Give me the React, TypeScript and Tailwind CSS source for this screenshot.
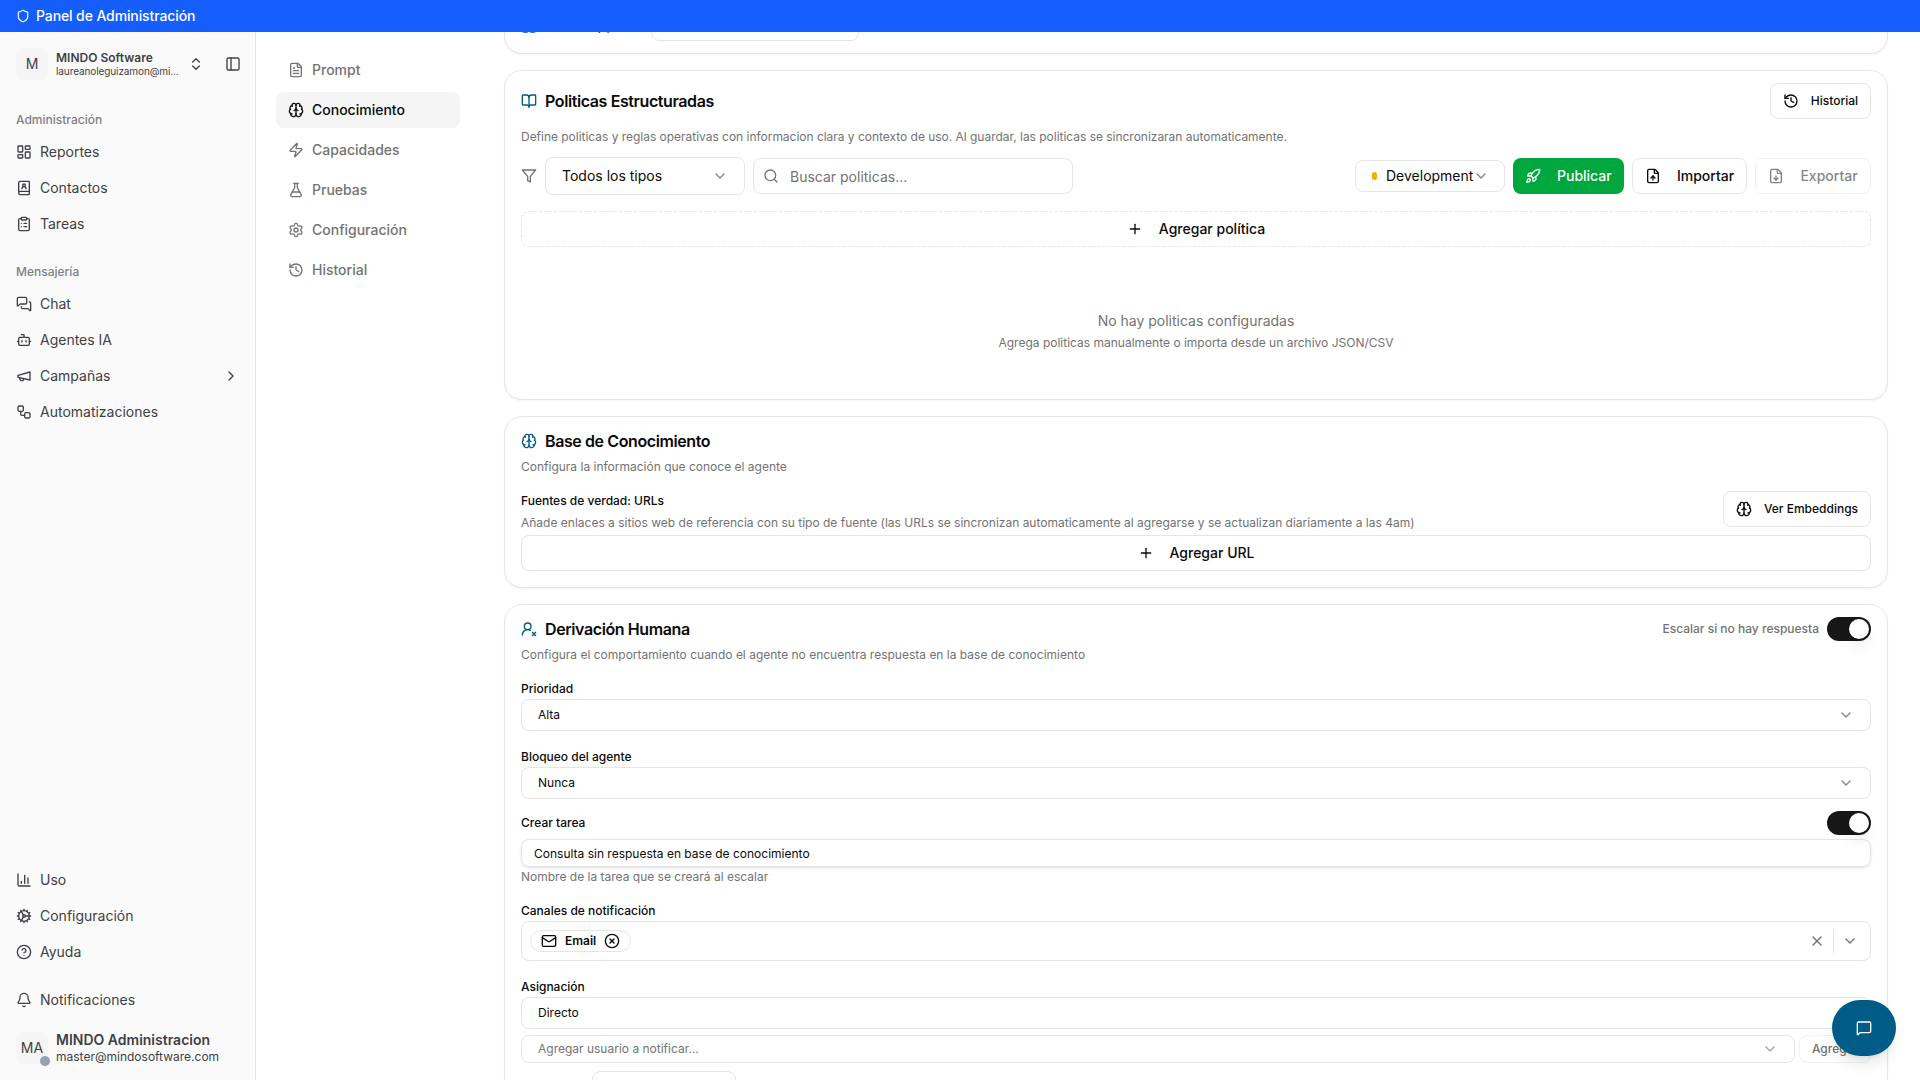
import React from 'react'
import {
  BellIcon,
  BookOpen,
  BotIcon,
  Brain,
  ChartColumn,
  ChevronDown,
  ChevronRight,
  ChevronsUpDown,
  CircleHelp,
  CircleX,
  ClipboardList,
  Cog,
  BookUser,
  FileDown,
  FileText,
  FileUp,
  FlaskConical,
  History,
  LayoutDashboard,
  LayoutGrid,
  Mail,
  MessageSquare,
  MessagesSquare,
  PanelLeft,
  Plus,
  Rocket,
  Search,
  Settings,
  Shield,
  UserRoundX,
  Workflow,
  X,
  Zap,
} from 'lucide-react'

type IconType = React.ComponentType<{ className?: string }>

interface NavEntry {
  icon: IconType
  label: string
  active?: boolean
  expandable?: boolean
}

const MegaphoneIcon: IconType = ({ className }) => (
  <svg className={className} viewBox="0 0 24 24" fill="none" stroke="currentColor" strokeWidth="2" strokeLinecap="round" strokeLinejoin="round">
    <path d="m3 11 18-5v12L3 14v-3z" />
    <path d="M11.6 16.8a3 3 0 1 1-5.8-1.6" />
  </svg>
)

const FilterIcon: IconType = ({ className }) => (
  <svg className={className} viewBox="0 0 24 24" fill="none" stroke="currentColor" strokeWidth="2" strokeLinecap="round" strokeLinejoin="round">
    <path d="M22 3H2l8 9.46V19l4 2v-8.54z" />
  </svg>
)

const ADMIN_ITEMS: NavEntry[] = [
  { icon: LayoutDashboard, label: 'Reportes' },
  { icon: BookUser, label: 'Contactos' },
  { icon: ClipboardList, label: 'Tareas' },
]

const MESSAGING_ITEMS: NavEntry[] = [
  { icon: MessagesSquare, label: 'Chat' },
  { icon: BotIcon, label: 'Agentes IA' },
  { icon: MegaphoneIcon, label: 'Campañas', expandable: true },
  { icon: Workflow, label: 'Automatizaciones' },
]

const FOOTER_ITEMS: NavEntry[] = [
  { icon: ChartColumn, label: 'Uso' },
  { icon: Cog, label: 'Configuración' },
  { icon: CircleHelp, label: 'Ayuda' },
]

const AGENT_TABS: NavEntry[] = [
  { icon: FileText, label: 'Prompt' },
  { icon: Brain, label: 'Conocimiento', active: true },
  { icon: Zap, label: 'Capacidades' },
  { icon: FlaskConical, label: 'Pruebas' },
  { icon: Settings, label: 'Configuración' },
  { icon: History, label: 'Historial' },
]

function SidebarItem({ icon: Icon, label, expandable }: NavEntry) {
  return (
    <a className="flex h-8 items-center gap-2 rounded-md px-2 text-sm text-[#3f3f46]">
      <Icon className="size-4 shrink-0" />
      <span className="flex-1">{label}</span>
      {expandable && <ChevronRight className="size-4" />}
    </a>
  )
}

function SidebarGroup({ label, items }: { label: string; items: NavEntry[] }) {
  return (
    <div className="p-2">
      <p className="flex h-8 items-center px-2 text-xs font-medium text-[#7f7f86]">{label}</p>
      <div className="flex flex-col gap-1">
        {items.map(item => <SidebarItem key={item.label} {...item} />)}
      </div>
    </div>
  )
}

function Sidebar() {
  return (
    <aside className="flex w-64 shrink-0 flex-col border-r border-[#e5e5e5] bg-[#fafafa] text-[#3f3f46]">
      {/* Workspace switcher */}
      <div className="flex h-16 items-center pl-4">
        <div className="flex size-8 shrink-0 items-center justify-center rounded-lg bg-[#f5f5f5] text-sm">M</div>
        <div className="ml-2 w-[125px] shrink-0">
          <p className="text-xs leading-[14px] font-semibold">MINDO Software</p>
          <p className="text-[10px] leading-[13px] tracking-[-0.01em] whitespace-nowrap">laureanoleguizamon@mi...</p>
        </div>
        <ChevronsUpDown className="ml-[7px] size-4 shrink-0" />
        <PanelLeft className="ml-[21px] size-4 shrink-0" />
      </div>

      <SidebarGroup label="Administración" items={ADMIN_ITEMS} />
      <SidebarGroup label="Mensajería" items={MESSAGING_ITEMS} />

      <div className="mt-auto flex flex-col gap-1 px-2">
        {FOOTER_ITEMS.map(item => <SidebarItem key={item.label} {...item} />)}
      </div>
      <div className="mt-4 px-2">
        <SidebarItem icon={BellIcon} label="Notificaciones" />
      </div>

      {/* Current user */}
      <div className="my-2 flex h-12 items-center px-4">
        <div className="relative flex size-8 items-center justify-center rounded-lg bg-[#f5f5f5] text-sm">
          MA
          <span className="absolute -right-[3px] -bottom-[3px] size-3 rounded-full border border-[#fafafa] bg-[#99a1af]" />
        </div>
        <div className="ml-2 pb-px">
          <p className="text-sm leading-[17px] font-semibold">MINDO Administracion</p>
          <p className="text-xs leading-[17px]">master@mindosoftware.com</p>
        </div>
      </div>
    </aside>
  )
}

function AgentTabs() {
  return (
    <nav className="flex w-[184px] shrink-0 flex-col gap-1 pt-5">
      {AGENT_TABS.map(({ icon: Icon, label, active }) => (
        <a
          key={label}
          className={`flex h-9 items-center gap-2 rounded-lg px-3 text-sm font-medium ${active ? 'bg-[#f5f5f5] text-[#0a0a0a]' : 'text-[#737373]'}`}
        >
          <Icon className="size-4" />
          {label}
        </a>
      ))}
    </nav>
  )
}

function Card({ className = '', children }: { className?: string; children: React.ReactNode }) {
  return (
    <section className={`shrink-0 rounded-[18px] border border-[#e5e5e5] bg-white px-4 shadow-xs ${className}`}>
      {children}
    </section>
  )
}

function CardTitle({ icon: Icon, children }: { icon: IconType; children: React.ReactNode }) {
  return (
    <h2 className="flex items-center gap-2 text-base leading-4 font-semibold tracking-tight">
      <Icon className="size-4 text-[#005c87]" />
      {children}
    </h2>
  )
}

interface OutlineButtonProps {
  icon: IconType
  className?: string
  children: React.ReactNode
}

function OutlineButton({ icon: Icon, className = '', children }: OutlineButtonProps) {
  return (
    <button className={`flex h-9 items-center justify-center rounded-lg border border-[#e5e5e5] font-medium ${className}`}>
      <Icon className="size-4" />
      {children}
    </button>
  )
}

function Toggle() {
  return (
    <span className="flex h-6 w-11 items-center justify-end rounded-full bg-[#171717] p-0.5">
      <span className="size-5 rounded-full bg-white shadow-lg" />
    </span>
  )
}

function SelectField({ label, value }: { label: string; value: string }) {
  return (
    <div>
      <p className="text-xs leading-5 font-medium">{label}</p>
      <div className="flex h-8 items-center justify-between rounded-lg border border-[#e5e5e5] px-4 text-xs">
        {value}
        <ChevronDown className="size-4 text-[#858585]" />
      </div>
    </div>
  )
}

function PoliciesCard() {
  return (
    <Card className="h-[330px] pt-3">
      <div className="flex items-center justify-between">
        <CardTitle icon={BookOpen}>Politicas Estructuradas</CardTitle>
        <OutlineButton icon={History} className="w-[101px] gap-3 text-xs">Historial</OutlineButton>
      </div>
      <p className="mt-2.5 text-xs tracking-[-0.002em] text-[#737373]">
        Define politicas y reglas operativas con informacion clara y contexto de uso. Al guardar, las politicas se sincronizaran automaticamente.
      </p>

      {/* Filters and actions */}
      <div className="mt-3 flex items-center gap-2 text-sm">
        <FilterIcon className="size-4 text-[#737373]" />
        <div className="flex h-[38px] w-[200px] items-center justify-between rounded-lg border border-[#e5e5e5] px-4">
          Todos los tipos
          <ChevronDown className="size-4 text-[#858585]" />
        </div>
        <div className="flex h-9 w-80 items-center gap-[11px] rounded-lg border border-[#e5e5e5] px-[9px] text-[#737373]">
          <Search className="size-4" />
          <span className="pt-0.5">Buscar politicas...</span>
        </div>
        <div className="ml-auto flex h-8 w-[150px] items-center rounded-lg border border-[#e5e5e5] pl-4">
          <span className="mr-[9px] h-2 w-[5px] rounded-full bg-[#f0b100]" />
          Development
          <ChevronDown className="size-4 text-[#858585]" />
        </div>
        <button className="flex h-9 w-[111px] items-center gap-4 rounded-lg bg-[#00a63e] px-3 font-medium text-white">
          <Rocket className="size-4" />
          Publicar
        </button>
        <OutlineButton icon={FileUp} className="w-[115px] gap-4">Importar</OutlineButton>
        <OutlineButton icon={FileDown} className="w-[116px] gap-4 opacity-50">Exportar</OutlineButton>
      </div>

      <OutlineButton icon={Plus} className="mt-4 w-full gap-4 border-dashed text-sm">Agregar política</OutlineButton>

      <div className="mt-16 text-center text-[#737373]">
        <p className="text-sm">No hay politicas configuradas</p>
        <p className="mt-1 text-xs">Agrega politicas manualmente o importa desde un archivo JSON/CSV</p>
      </div>
    </Card>
  )
}

function KnowledgeCard() {
  return (
    <Card className="h-[172px] pt-4">
      <CardTitle icon={Brain}>Base de Conocimiento</CardTitle>
      <p className="mt-2.5 text-xs text-[#737373]">Configura la información que conoce el agente</p>
      <div className="mt-4 flex h-9 justify-between">
        <div>
          <p className="text-xs leading-5 font-medium">Fuentes de verdad: URLs</p>
          <p className="mt-1 text-xs text-[#737373]">
            Añade enlaces a sitios web de referencia con su tipo de fuente (las URLs se sincronizan automaticamente al agregarse y se actualizan diariamente a las 4am)
          </p>
        </div>
        <OutlineButton icon={Brain} className="w-[148px] gap-3 text-xs">Ver Embeddings</OutlineButton>
      </div>
      <OutlineButton icon={Plus} className="mt-2 w-full gap-4 text-sm">Agregar URL</OutlineButton>
    </Card>
  )
}

function HandoffCard() {
  return (
    <Card className="h-[560px] pt-3">
      <div className="flex h-6 items-center justify-between">
        <CardTitle icon={UserRoundX}>Derivación Humana</CardTitle>
        <div className="flex items-center gap-2 text-xs font-medium text-[#737373]">
          Escalar si no hay respuesta
          <Toggle />
        </div>
      </div>
      <p className="mt-1.5 mb-4 text-xs text-[#737373]">
        Configura el comportamiento cuando el agente no encuentra respuesta en la base de conocimiento
      </p>

      <div className="flex flex-col gap-4">
        <SelectField label="Prioridad" value="Alta" />
        <SelectField label="Bloqueo del agente" value="Nunca" />
      </div>

      <div className="mt-3 flex h-6 items-center justify-between text-xs font-medium">
        Crear tarea
        <Toggle />
      </div>
      <div className="mt-1 flex h-7 items-center rounded-lg border border-[#e5e5e5] px-3 pt-0.5 text-xs shadow-sm">
        Consulta sin respuesta en base de conocimiento
      </div>
      <p className="mt-0.5 text-xs text-[#737373]">Nombre de la tarea que se creará al escalar</p>

      <p className="mt-4 text-xs leading-5 font-medium">Canales de notificación</p>
      <div className="flex h-10 items-center rounded-lg border border-[#e5e5e5] pr-3 pl-2">
        <span className="flex h-[22px] items-center gap-2 rounded-full border border-[#e5e5e5] px-2.5 text-xs font-semibold">
          <Mail className="size-4" />
          Email
          <CircleX className="size-4" />
        </span>
        <X className="ml-auto size-4 text-[#737373]" />
        <span className="mx-2 h-6 w-px bg-[#e5e5e5]" />
        <ChevronDown className="size-4 text-[#737373]" />
      </div>

      <div className="mt-4">
        <SelectField label="Asignación" value="Directo" />
      </div>
      <div className="mt-1.5 flex h-7 gap-1 text-xs text-[#737373]">
        <div className="flex flex-1 items-center justify-between rounded-lg border border-[#e5e5e5] px-4">
          Agregar usuario a notificar...
          <ChevronDown className="size-4 text-[#a3a3a3]" />
        </div>
        <button className="w-[72px] rounded-lg border border-[#f0f0f0] font-medium">Agregar</button>
      </div>
      <div className="mt-2 h-7 pl-[71px]">
        <div className="h-7 w-36 rounded-lg border border-[#e5e5e5]" />
      </div>
    </Card>
  )
}

export default function App() {
  return (
    <div className="flex h-[1080px] w-[1920px] flex-col overflow-hidden bg-white font-['Inter',sans-serif] text-[#0a0a0a]">
      <header className="z-10 flex h-8 shrink-0 items-center gap-1.5 bg-[#155dfc] px-4 text-sm font-medium tracking-[-0.008em] text-white">
        <Shield className="size-3.5" />
        Panel de Administración
      </header>

      <div className="flex min-h-0 flex-1">
        <Sidebar />
        <main className="flex min-h-0 flex-1 overflow-hidden pr-8 pl-5">
          <AgentTabs />
          <div className="ml-11 flex min-w-0 flex-1 flex-col gap-4">
            {/* Tail of the card scrolled under the header */}
            <Card className="-mt-9 h-[58px]">
              <div className="mt-3 flex h-8 items-center text-sm font-medium">
                <LayoutGrid className="mt-0.5 size-4 text-[#005c87]" />
                <span className="ml-2 w-[106px]">WhatsApp</span>
                <div className="h-8 w-[208px] rounded-lg border border-[#e5e5e5]" />
              </div>
            </Card>
            <PoliciesCard />
            <KnowledgeCard />
            <HandoffCard />
          </div>
        </main>
      </div>

      <button className="fixed right-6 bottom-6 flex h-14 w-16 items-center justify-center rounded-full bg-[#005c87] text-white shadow-lg">
        <MessageSquare className="size-4" />
      </button>
    </div>
  )
}
